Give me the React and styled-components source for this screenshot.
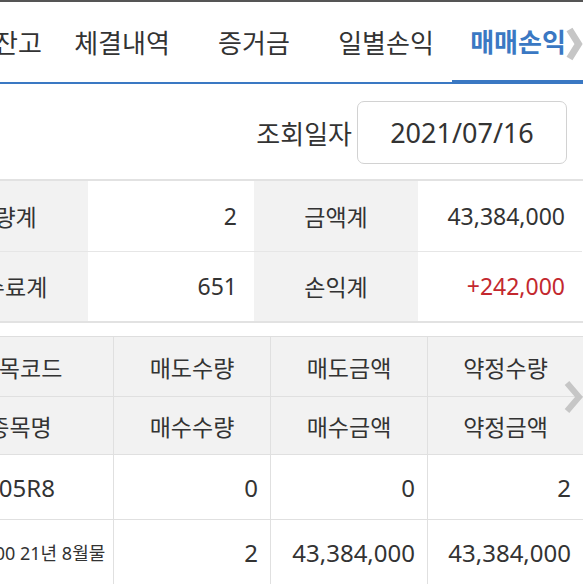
import React from 'react'
import styled, { createGlobalStyle } from 'styled-components'

const GlobalStyle = createGlobalStyle`
  body {
    margin: 0;
    background: #fff;
    font-family: "Noto Sans", "Noto Sans CJK KR", sans-serif;
    color: #333;
  }
`

const Page = styled.div`
  position: relative;
  width: 583px;
  height: 584px;
  overflow: hidden;
  border-top: 2px solid #555;
  box-sizing: border-box;
`

const TabBar = styled.div`
  position: relative;
  display: flex;
  height: 80px;
  margin-left: -20px;
  border-bottom: 2px solid #3a78c3;
`

const Tab = styled.div`
  flex: 0 0 ${(p) => p.w}px;
  display: flex;
  align-items: center;
  justify-content: center;
  font-size: 26px;
  white-space: nowrap;
  padding-bottom: 1px;
  box-sizing: border-box;
  color: ${(p) => (p.active ? '#3a78c3' : '#333')};
  font-weight: ${(p) => (p.active ? 700 : 400)};
  border-bottom: ${(p) => (p.active ? '4px solid #3a78c3' : '0')};
  margin-bottom: ${(p) => (p.active ? '-2px' : '0')};
`

const Arrow = styled.svg`
  position: absolute;
  right: 0;
  top: ${(p) => p.top}px;
`

const DateRow = styled.div`
  display: flex;
  justify-content: flex-end;
  align-items: center;
  gap: 5px;
  padding: 17px 16px 15px 0;
`

const DateLabel = styled.span`
  font-size: 26px;
`

const DateBox = styled.div`
  width: 210px;
  height: 63px;
  box-sizing: border-box;
  border: 1px solid #d2d2d2;
  border-radius: 7px;
  display: flex;
  align-items: center;
  justify-content: center;
  font-size: 27px;
`

const Summary = styled.div`
  display: grid;
  grid-template-columns: 166px 166px 164px 164px;
  margin-left: -78px;
  border-top: 2px solid #e2e2e2;
  border-bottom: 2px solid #e2e2e2;
`

const SumCell = styled.div`
  height: 70px;
  display: flex;
  align-items: center;
  justify-content: ${(p) => (p.label ? 'center' : 'flex-end')};
  padding-right: ${(p) => (p.label ? 0 : 17)}px;
  padding-bottom: 1px;
  box-sizing: border-box;
  background: ${(p) => (p.label ? '#f2f2f2' : '#fff')};
  border-top: ${(p) => (p.first ? '0' : '1px solid #e6e6e6')};
  font-size: 23px;
  color: ${(p) => (p.red ? '#c3282e' : '#333')};
`

const Grid = styled.div`
  display: grid;
  grid-template-columns: 186px 157px 157px 156px;
  margin-left: -73px;
  margin-top: 13px;
  border-top: 1px solid #dedede;
`

const Cell = styled.div`
  height: ${(p) => p.h}px;
  display: flex;
  align-items: center;
  justify-content: ${(p) => p.align || 'center'};
  padding-right: ${(p) => (p.align === 'flex-end' ? 12 : 0)}px;
  box-sizing: border-box;
  white-space: nowrap;
  background: ${(p) => (p.head ? '#f2f2f2' : '#fff')};
  border-bottom: 1px solid #e0e0e0;
  border-left: ${(p) => (p.first ? '0' : '1px solid #e0e0e0')};
  font-size: ${(p) => p.size || 23}px;
`

const Chevron = ({ top, w, h, sw }) => (
  <Arrow top={top} width={w} height={h} viewBox={`0 0 ${w} ${h}`}>
    <polyline
      points={`${sw / 2 + 1},${sw / 2} ${w - sw / 2 - 1},${h / 2} ${sw / 2 + 1},${h - sw / 2}`}
      fill="none"
      stroke="#c6c6c6"
      strokeWidth={sw}
      strokeLinejoin="miter"
    />
  </Arrow>
)

const tabs = [
  { t: '잔고', w: 76 },
  { t: '체결내역', w: 132 },
  { t: '증거금', w: 132 },
  { t: '일별손익', w: 132 },
  { t: '매매손익', w: 132, active: true },
]

const header = [
  ['종목코드', '매도수량', '매도금액', '약정수량'],
  ['종목명', '매수수량', '매수금액', '약정금액'],
]

const App = () => {
  return (
    <Page>
      <GlobalStyle />
      <TabBar>
        {tabs.map((tab) => (
          <Tab key={tab.t} w={tab.w} active={tab.active}>
            {tab.t}
          </Tab>
        ))}
      </TabBar>
      <Chevron top={24} w={18} h={36} sw={7} />

      <DateRow>
        <DateLabel>조회일자</DateLabel>
        <DateBox>2021/07/16</DateBox>
      </DateRow>

      <Summary>
        <SumCell label first>수량계</SumCell>
        <SumCell first>2</SumCell>
        <SumCell label first>금액계</SumCell>
        <SumCell first>43,384,000</SumCell>
        <SumCell label>수수료계</SumCell>
        <SumCell>651</SumCell>
        <SumCell label>손익계</SumCell>
        <SumCell red>+242,000</SumCell>
      </Summary>

      <Grid>
        {header.map((row, r) =>
          row.map((h, i) => (
            <Cell key={h} head h={r === 0 ? 60 : 58} first={i === 0}>
              {h}
            </Cell>
          ))
        )}
        <Cell h={65} first size={24}>105R8</Cell>
        <Cell h={65} size={24} align="flex-end">0</Cell>
        <Cell h={65} size={24} align="flex-end">0</Cell>
        <Cell h={65} size={24} align="flex-end">2</Cell>
        <Cell h={65} first size={18}>코스피200 21년 8월물</Cell>
        <Cell h={65} size={24} align="flex-end">2</Cell>
        <Cell h={65} size={24} align="flex-end">43,384,000</Cell>
        <Cell h={65} size={24} align="flex-end">43,384,000</Cell>
      </Grid>
      <Chevron top={378} w={20} h={34} sw={6} />
    </Page>
  )
}

export default App
